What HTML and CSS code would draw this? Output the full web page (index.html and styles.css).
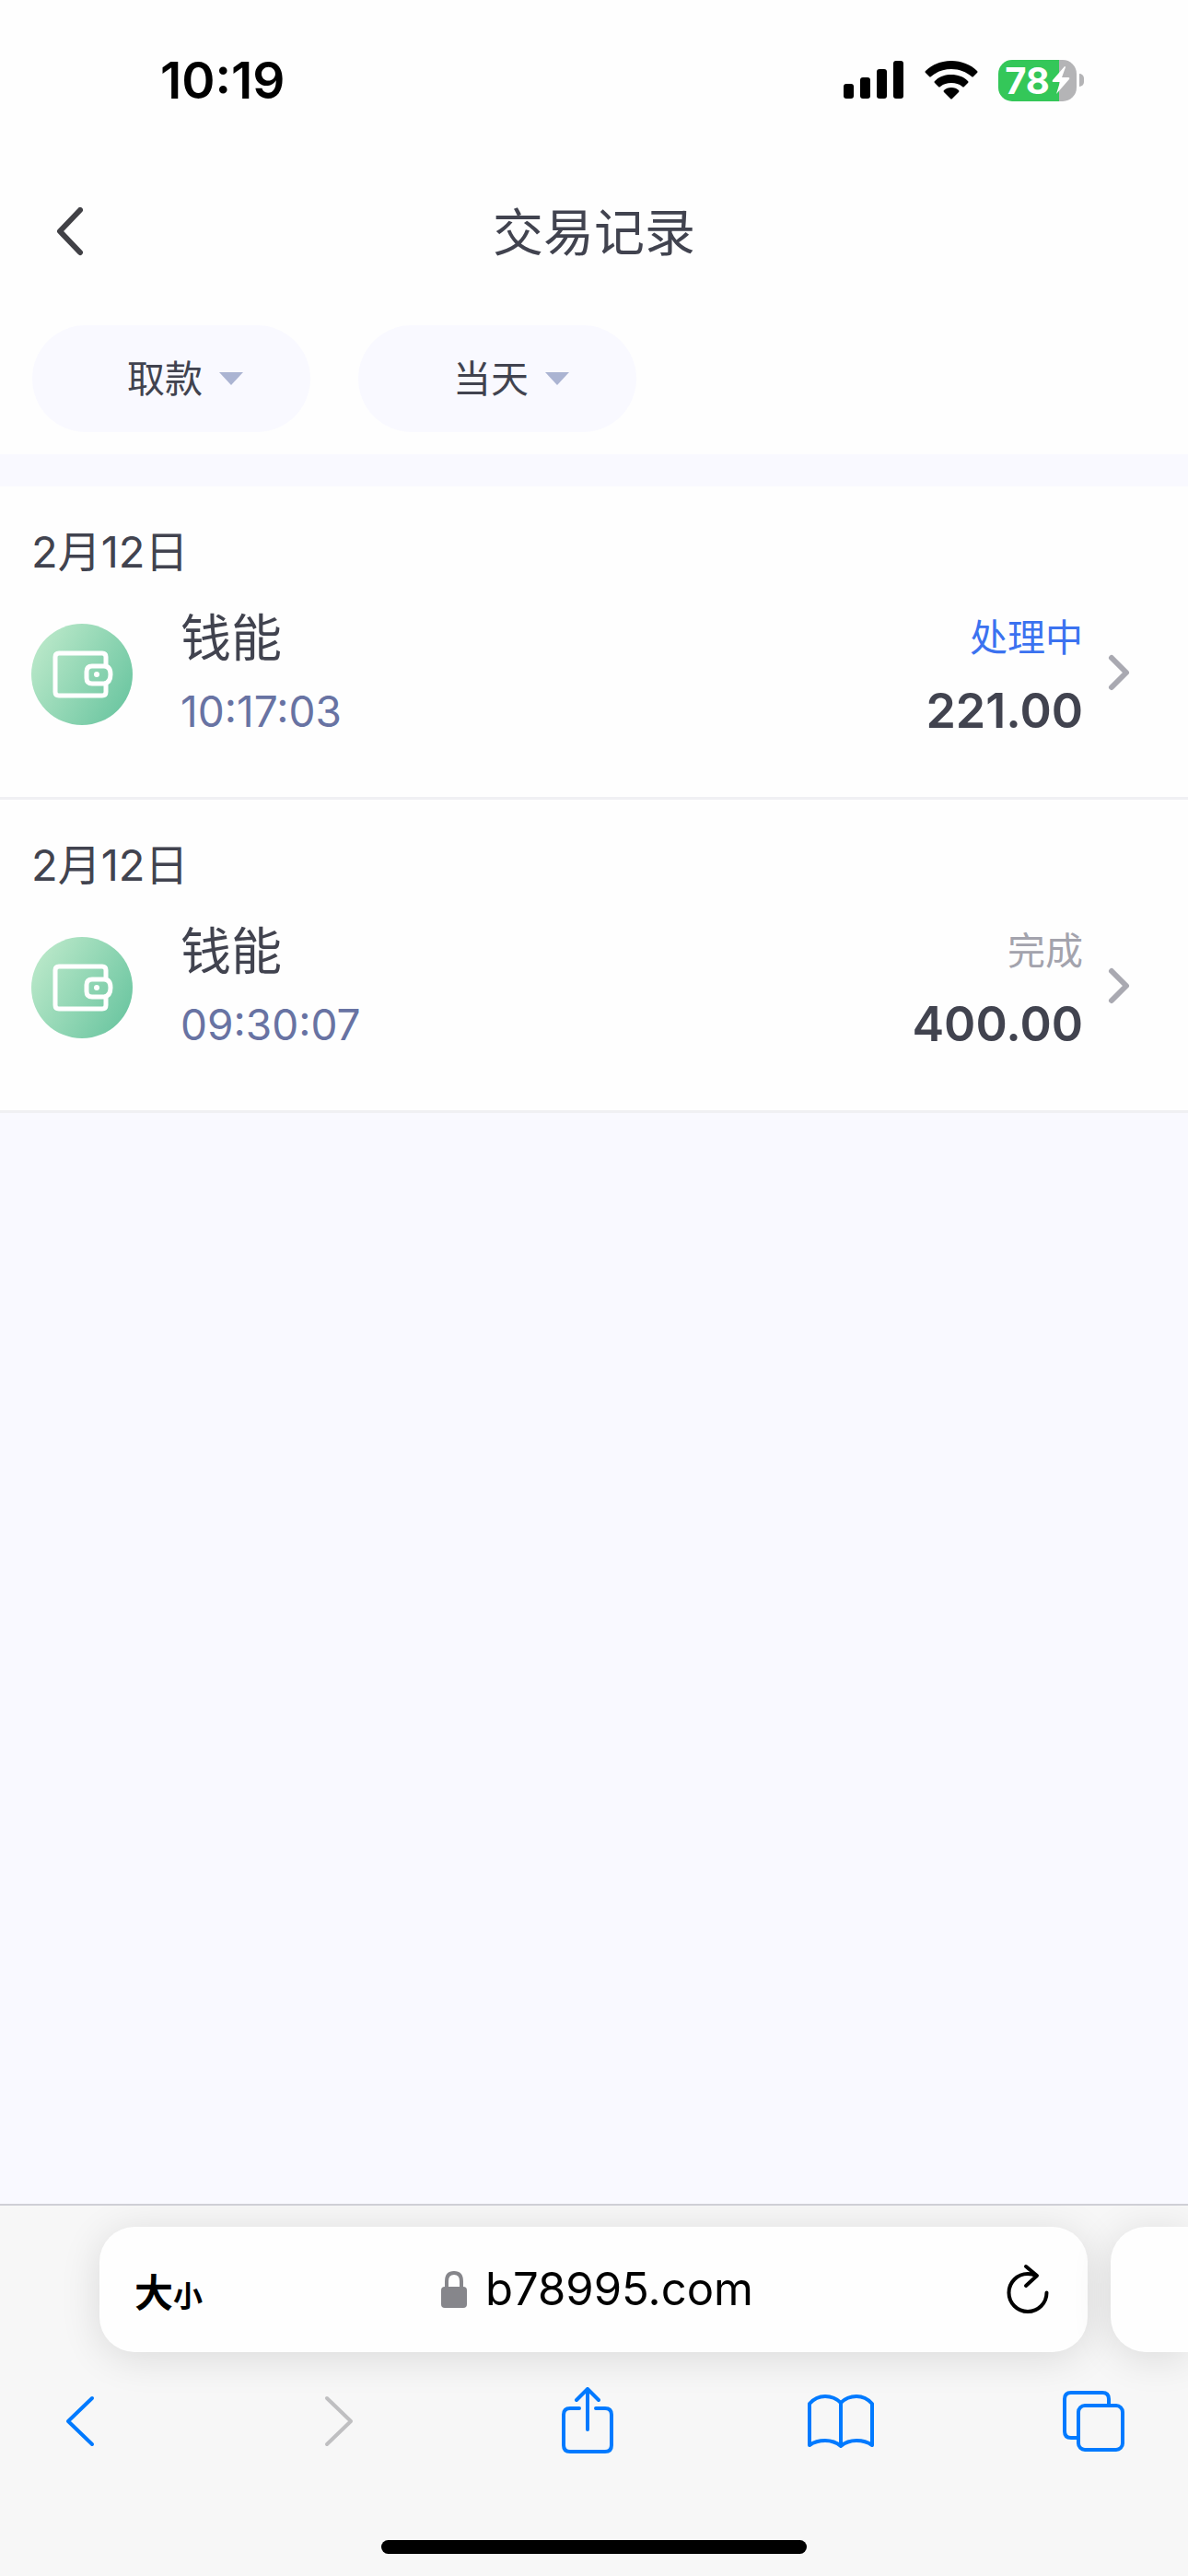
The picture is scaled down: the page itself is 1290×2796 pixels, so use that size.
FILE: index.html
```html
<!DOCTYPE html>
<html lang="zh-CN">
<head>
<meta charset="utf-8">
<meta name="viewport" content="width=device-width, initial-scale=1">
<title>交易记录</title>
<link rel="stylesheet" href="styles.css">
</head>
<body>
<div class="status-bar">
  <time class="clock">10:19</time>
  <div class="indicators">
    <svg class="signal" width="66" height="42" viewBox="0 0 66 42" aria-hidden="true">
      <rect x="0" y="25" width="11" height="16" rx="3"/>
      <rect x="18" y="18" width="11" height="23" rx="3"/>
      <rect x="36" y="9" width="11" height="32" rx="3"/>
      <rect x="54" y="0" width="11" height="41" rx="3"/>
    </svg>
    <svg class="wifi" width="58" height="42" viewBox="0 0 58 42" aria-hidden="true">
      <path d="M29 0C18 0 8 4 1 11Q0 12 1 13L5 17Q6 18 7 17C13 12 20 9 29 9S45 12 51 17Q52 18 53 17L57 13Q58 12 57 11C50 4 40 0 29 0Z"/>
      <path d="M29 15C22 15 16 17 11 22Q10 23 11 24L15 28Q16 29 17 28C21 25 24 24 29 24S37 25 41 28Q42 29 43 28L47 24Q48 23 47 22C42 17 36 15 29 15Z"/>
      <path d="M29 29Q24 29 21 32Q20 33 21 34L28 41Q29 42 30 41L37 34Q38 33 37 32Q34 29 29 29Z"/>
    </svg>
    <div class="battery">
      <div class="battery-body">
        <span>78</span>
        <svg width="20" height="30" viewBox="0 0 20 30" aria-hidden="true"><path d="M14 0L1 15Q0 17 2 17H9L5 30L19 14Q20 12 18 12H11L15 1Q15 0 14 0Z"/></svg>
      </div>
      <div class="battery-cap"></div>
    </div>
  </div>
</div>

<header class="top">
  <div class="title-bar">
    <button class="back" type="button" aria-label="返回">
      <svg width="30" height="54" viewBox="0 0 30 54" aria-hidden="true"><path d="M26 3L4 26L26 49"/></svg>
    </button>
    <h1>交易记录</h1>
  </div>
  <div class="filters">
    <button class="filter" type="button">取款<span class="caret"></span></button>
    <button class="filter" type="button">当天<span class="caret"></span></button>
  </div>
</header>

<main class="records">
  <article class="record">
    <h2>2月12日</h2>
    <a class="record-row" href="#record-1">
      <svg class="wallet" width="110" height="110" viewBox="0 0 110 110" aria-hidden="true">
        <defs><linearGradient id="mint" x1="0" y1="0.2" x2="1" y2="0.8"><stop offset="0" stop-color="#bce9ca"/><stop offset="1" stop-color="#6ac5a0"/></linearGradient></defs>
        <circle cx="55" cy="55" r="55" fill="url(#mint)"/>
        <path d="M81 46V36Q81 32 77 32H30Q26 32 26 36V74Q26 78 30 78H77Q81 78 81 74V66"/>
        <path d="M66 46H79Q86 46 86 55T79 65H66Q60 65 60 59V52Q60 46 66 46Z"/>
        <circle class="dot" cx="71" cy="55" r="3"/>
      </svg>
      <div class="what"><strong>钱能</strong><time>10:17:03</time></div>
      <div class="result"><span class="state pending">处理中</span><b>221.00</b></div>
      <svg class="go" width="24" height="40" viewBox="0 0 24 40" aria-hidden="true"><path d="M3 2L19 18L3 34"/></svg>
    </a>
  </article>
  <article class="record">
    <h2>2月12日</h2>
    <a class="record-row" href="#record-2">
      <svg class="wallet" width="110" height="110" viewBox="0 0 110 110" aria-hidden="true">
        <circle cx="55" cy="55" r="55" fill="url(#mint)"/>
        <path d="M81 46V36Q81 32 77 32H30Q26 32 26 36V74Q26 78 30 78H77Q81 78 81 74V66"/>
        <path d="M66 46H79Q86 46 86 55T79 65H66Q60 65 60 59V52Q60 46 66 46Z"/>
        <circle class="dot" cx="71" cy="55" r="3"/>
      </svg>
      <div class="what"><strong>钱能</strong><time>09:30:07</time></div>
      <div class="result"><span class="state">完成</span><b>400.00</b></div>
      <svg class="go" width="24" height="40" viewBox="0 0 24 40" aria-hidden="true"><path d="M3 2L19 18L3 34"/></svg>
    </a>
  </article>
</main>

<footer class="browser">
  <div class="tabs">
    <div class="address">
      <button class="text-size" type="button"><span class="big">大</span><span class="small">小</span></button>
      <button class="site" type="button">
        <svg width="28" height="40" viewBox="0 0 28 40" aria-hidden="true"><path class="shackle" d="M6 18V11Q6 2 14 2T22 11V18"/><rect x="0" y="17" width="28" height="23" rx="4"/></svg>
        b78995.com
      </button>
      <button class="reload" type="button" aria-label="重新载入">
        <svg width="46" height="54" viewBox="0 0 46 54" aria-hidden="true"><path d="M32 12Q28 10 23 10A20.500 20.500 0 1 0 43.500 30.500M21 2L33 12L21 23"/></svg>
      </button>
    </div>
    <div class="next-tab"></div>
  </div>
  <nav class="tools">
    <button type="button" aria-label="后退"><svg width="34" height="58" viewBox="0 0 34 58"><path d="M30 4L4 29L30 54"/></svg></button>
    <button type="button" aria-label="前进" disabled><svg width="46" height="58" viewBox="0 0 46 58"><path d="M16 4L42 29L16 54"/></svg></button>
    <button type="button" aria-label="共享"><svg width="58" height="74" viewBox="0 0 58 74"><path d="M20 23H10Q3 23 3 30V63Q3 70 10 70H48Q55 70 55 63V30Q55 23 48 23H38M29 46V2M17 14L29 2L41 14"/></svg></button>
    <button type="button" aria-label="书签"><svg width="72" height="60" viewBox="0 0 72 60"><path d="M36 10Q29 3 19 3T2 11V56Q9 51 19 51T36 57Q43 51 53 51T70 56V11Q63 3 53 3T36 10V57"/></svg></button>
    <button type="button" aria-label="标签页"><svg width="70" height="68" viewBox="0 0 70 68"><path d="M17 52H10Q3 52 3 45V10Q3 3 10 3H44Q51 3 51 10V17"/><rect x="18" y="17" width="48" height="48" rx="7"/></svg></button>
  </nav>
  <div class="home-bar"></div>
</footer>
</body>
</html>
```

FILE: styles.css
```css
* { box-sizing: border-box; }
body {
  margin: 0;
  min-height: 100vh;
  display: flex;
  flex-direction: column;
  background: #f9f9ff;
  color: #41434f;
  font-family: Inter, "Noto Sans CJK SC", sans-serif;
}
button {
  margin: 0;
  padding: 0;
  border: 0;
  background: none;
  color: inherit;
  font: inherit;
}
svg { display: block; flex: none; }

.status-bar {
  display: flex;
  align-items: center;
  justify-content: space-between;
  height: 174px;
  padding: 0 113px 0 174px;
  background: #fefefe;
  color: #000;
}
.clock { font-size: 55px; font-weight: 600; }
.indicators { display: flex; align-items: center; gap: 22px; }
.battery { display: flex; align-items: center; gap: 3px; }
.battery-body {
  display: flex;
  align-items: center;
  justify-content: center;
  gap: 2px;
  width: 85px;
  height: 45px;
  border-radius: 15px;
  background: linear-gradient(to right, #34c759 78%, #b4b4b6 78%);
  color: #fff;
  font-size: 40px;
  font-weight: 700;
  line-height: 45px;
}
.battery-body svg { fill: #fff; }
.battery-cap {
  width: 5px;
  height: 14px;
  border-radius: 0 5px 5px 0;
  background: #b4b4b6;
}

.top { background: #fefefe; padding-bottom: 24px; }
.title-bar {
  display: grid;
  grid-template-columns: 1fr auto 1fr;
  align-items: center;
  height: 156px;
  padding: 0 61px;
}
.back { justify-self: start; }
.back svg { fill: none; stroke: #414146; stroke-width: 6; stroke-linecap: round; stroke-linejoin: round; }
h1 { margin: 0; font-size: 55px; font-weight: 400; line-height: 80px; }
.filters { display: flex; gap: 52px; padding: 23px 35px 0; }
.filter {
  display: flex;
  align-items: center;
  justify-content: center;
  gap: 18px;
  width: 302px;
  height: 116px;
  padding: 0 0 6px 30px;
  border-radius: 58px;
  background: #f9f9ff;
  font-size: 41px;
}
.caret {
  margin-top: 6px;
  border: 13px solid transparent;
  border-top: 14px solid #abb4d2;
  border-bottom: 0;
}

.records { flex: 1; padding-top: 35px; }
.record {
  height: 340px;
  padding: 36px 62px 0 34px;
  border-bottom: 3px solid #f0f0f3;
  background: #fefefe;
}
h2 { margin: 0; font-size: 47px; font-weight: 400; line-height: 70px; }
.record-row {
  display: flex;
  align-items: center;
  padding-top: 18px;
  color: inherit;
  text-decoration: none;
}
.wallet path { fill: none; stroke: #fff; stroke-width: 5; }
.wallet .dot { fill: #fff; }
.what { display: flex; flex-direction: column; flex: 1; margin-left: 52px; }
.what strong { font-size: 55px; font-weight: 400; line-height: 80px; }
.what time { color: #6873a3; font-size: 46px; line-height: 80px; }
.result { display: flex; flex-direction: column; align-items: flex-end; margin-right: 28px; }
.state { color: #a3a3ad; font-size: 41px; line-height: 80px; }
.pending { color: #3b72f0; }
.result b { font-size: 52px; font-weight: 600; line-height: 80px; }
.go { fill: none; stroke: #a9a9b1; stroke-width: 6; stroke-linecap: round; stroke-linejoin: round; overflow: visible; }

.browser {
  border-top: 2px solid #cfcfd6;
  background: #f7f7f7;
  color: #000;
  overflow: hidden;
}
.tabs { display: flex; gap: 25px; padding: 23px 0 0 108px; }
.address, .next-tab {
  height: 136px;
  border-radius: 38px;
  background: #fefefe;
  box-shadow: 0 6px 44px rgba(0, 0, 0, 0.12);
}
.address {
  flex: 1;
  display: grid;
  grid-template-columns: 1fr auto 1fr;
  align-items: center;
  padding: 0 42px 0 38px;
}
.next-tab { width: 84px; border-radius: 38px 0 0 38px; }
.text-size { justify-self: start; display: flex; align-items: baseline; font-weight: 700; }
.big { font-size: 42px; }
.small { font-size: 32px; }
.site { display: flex; align-items: center; gap: 20px; padding-left: 12px; font-size: 49px; line-height: 60px; }
.site svg { fill: #86868b; }
.site .shackle { fill: none; stroke: #86868b; stroke-width: 4; }
.reload { justify-self: end; }
.reload svg { fill: none; stroke: #000; stroke-width: 4; stroke-linecap: round; stroke-linejoin: round; overflow: visible; }
.tools {
  display: flex;
  align-items: center;
  justify-content: space-between;
  height: 150px;
  padding: 0 66px 0 51px;
  color: #007aff;
}
.tools button { display: flex; justify-content: center; width: 72px; }
.tools svg { fill: none; stroke: currentColor; stroke-width: 4; stroke-linecap: round; stroke-linejoin: round; }
.tools button:disabled { color: #bfbfc1; }
.home-bar {
  width: 462px;
  height: 15px;
  margin: 54px auto 24px;
  border-radius: 8px;
  background: #000;
}
```
